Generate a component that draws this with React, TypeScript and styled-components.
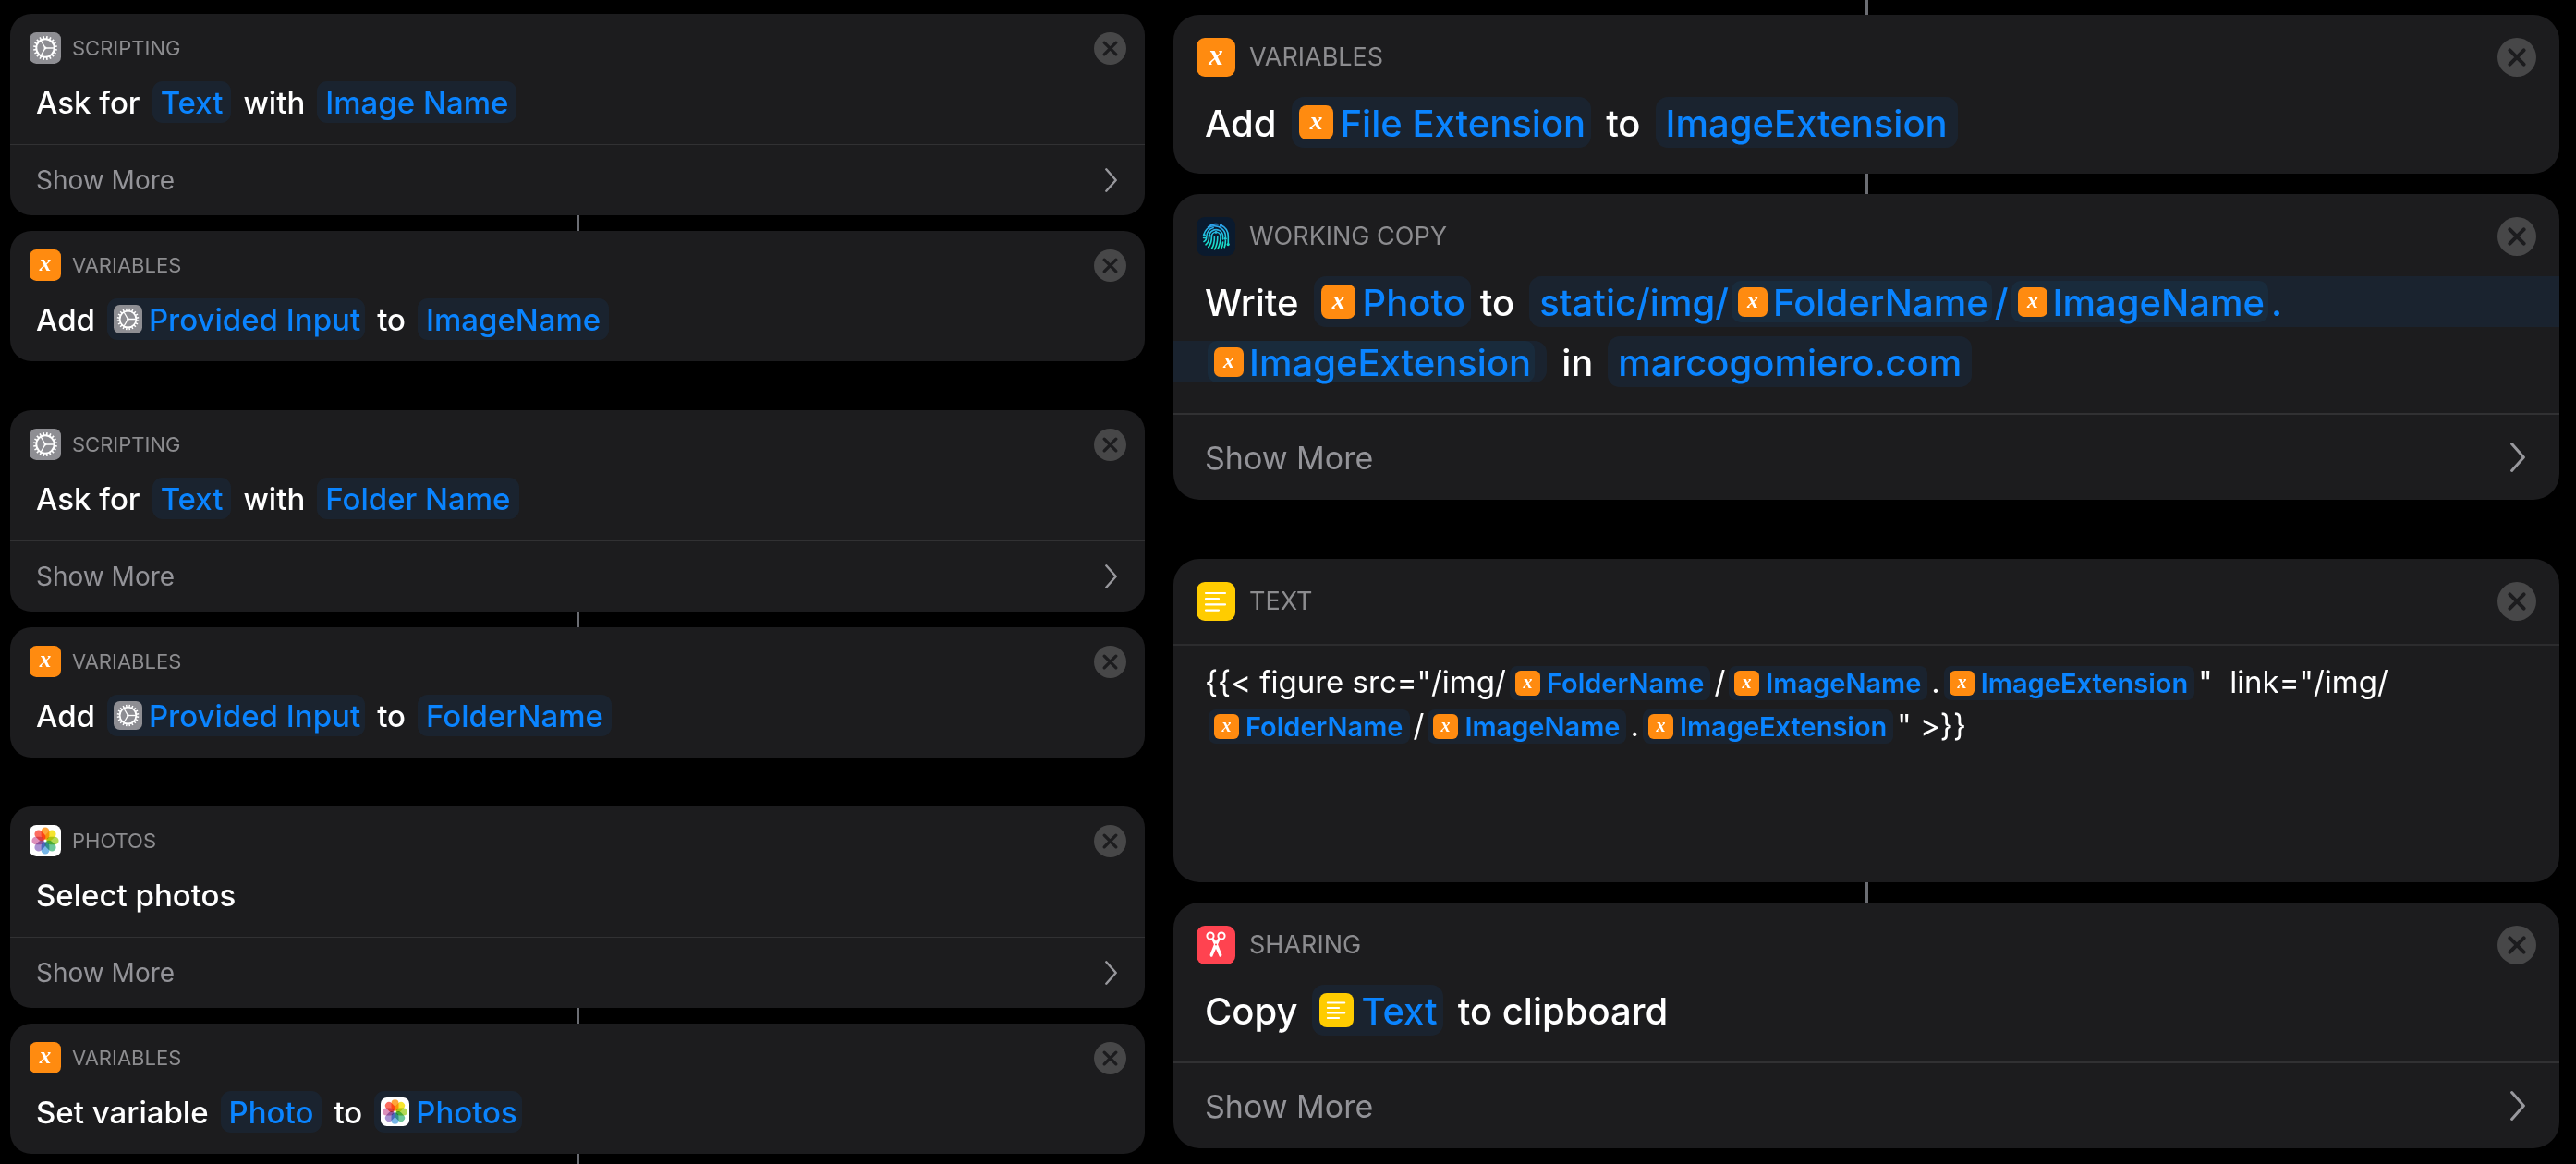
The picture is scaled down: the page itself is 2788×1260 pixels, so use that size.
import React from "react";
import styled, { createGlobalStyle, css, ThemeProvider } from "styled-components";

const small = {
  cardRadius: 23,
  headerHeight: 73,
  headerPad: "20px 20px 19px 21px",
  headerGap: 12,
  icon: 34,
  close: 35,
  label: 22,
  text: 33,
  more: 28,
  line: 45,
  lineGap: 8,
  wordGap: 13,
  bodyPad: 28,
  bodyBottom: 23,
  pillRadius: 11,
  pillPad: 9,
  tokenIcon: 31,
  tokenPad: 7,
  moreHeight: 76,
  morePadRight: 30,
  chevron: 26,
  divider: 1,
  connector: 17,
  connectorWidth: 3,
};

const large: typeof small = {
  cardRadius: 28,
  headerHeight: 89,
  headerPad: "25px 25px 22px 25px",
  headerGap: 15,
  icon: 42,
  close: 42,
  label: 27,
  text: 40,
  more: 34,
  line: 55,
  lineGap: 10,
  wordGap: 16,
  bodyPad: 34,
  bodyBottom: 28,
  pillRadius: 13,
  pillPad: 11,
  tokenIcon: 37,
  tokenPad: 8,
  moreHeight: 92,
  morePadRight: 37,
  chevron: 32,
  divider: 2,
  connector: 22,
  connectorWidth: 4,
};

declare module "styled-components" {
  export interface DefaultTheme {
    cardRadius: number; headerHeight: number; headerPad: string; headerGap: number; icon: number;
    close: number; label: number; text: number; more: number; line: number; lineGap: number;
    wordGap: number; bodyPad: number; bodyBottom: number; pillRadius: number; pillPad: number;
    tokenIcon: number; tokenPad: number; moreHeight: number; morePadRight: number; chevron: number;
    divider: number; connector: number; connectorWidth: number;
  }
}

const GlobalStyle = createGlobalStyle`
  *, *::before, *::after { box-sizing: border-box; }
  body { margin: 0; background: #000; }
  button { border: 0; padding: 0; margin: 0; background: none; font: inherit; color: inherit; text-align: left; cursor: pointer; }
  svg { display: block; flex: none; }
`;

const Page = styled.main`
  display: grid;
  grid-template-columns: 1228fr 1500fr;
  column-gap: 31px;
  min-height: 100vh;
  padding: 0 18px 0 11px;
  background: #000;
  color: #fff;
  font-family: Inter, "Liberation Sans", sans-serif;
`;

const Column = styled.div<{ $top?: number }>`
  display: flex;
  flex-direction: column;
  min-width: 0;
  padding-top: ${(p) => p.$top ?? 0}px;
`;

const Connector = styled.div<{ $height?: number; $grow?: boolean }>`
  align-self: center;
  width: ${(p) => p.theme.connectorWidth}px;
  ${(p) => (p.$grow ? css`flex: 1;` : css`height: ${p.$height ?? p.theme.connector}px;`)}
  background: #6b6d73;
`;

const Spacer = styled.div<{ $height: number }>`
  height: ${(p) => p.$height}px;
`;

const CardBox = styled.section`
  overflow: hidden;
  border-radius: ${(p) => p.theme.cardRadius}px;
  background: #1c1c1e;
`;

const Header = styled.header`
  display: flex;
  align-items: center;
  gap: ${(p) => p.theme.headerGap}px;
  height: ${(p) => p.theme.headerHeight}px;
  padding: ${(p) => p.theme.headerPad};
`;

const Title = styled.h2`
  flex: 1;
  margin: 0;
  color: #8c8c8f;
  font-size: ${(p) => p.theme.label}px;
  font-weight: 400;
  line-height: ${(p) => p.theme.icon}px;
`;

const CloseButton = styled.button`
  flex: none;
  width: ${(p) => p.theme.close}px;
  height: ${(p) => p.theme.close}px;
`;

const Sentence = styled.div`
  display: flex;
  flex-direction: column;
  gap: ${(p) => p.theme.lineGap}px;
  padding-bottom: ${(p) => p.theme.bodyBottom}px;
  font-size: ${(p) => p.theme.text}px;
  font-weight: 500;
  line-height: ${(p) => p.theme.line - 2}px;
  white-space: pre;
`;

const Line = styled.div<{ $bleedLeft?: boolean; $bleedRight?: boolean }>`
  display: flex;
  align-items: center;
  gap: ${(p) => p.theme.wordGap}px;
  padding-left: ${(p) => (p.$bleedLeft ? 0 : p.theme.bodyPad)}px;
  padding-right: ${(p) => (p.$bleedRight ? 0 : p.theme.bodyPad)}px;
`;

const Word = styled.span`
  display: block;
  padding-top: 2px;
`;

const TightPair = styled.span`
  display: flex;
  gap: 10px;
`;

const PillButton = styled.button`
  padding: 0 ${(p) => p.theme.pillPad}px;
  border-radius: ${(p) => p.theme.pillRadius}px;
  background: rgba(10, 132, 255, 0.08);
  color: #0a84ff;
`;

const IconPill = styled(PillButton)`
  display: flex;
  align-items: center;
  gap: ${(p) => p.theme.tokenPad}px;
  padding: 0 ${(p) => p.theme.tokenPad - 2}px 0 ${(p) => p.theme.tokenPad}px;
`;

const PathStart = styled.span`
  display: flex;
  flex: 1;
  align-items: center;
  padding-left: ${(p) => p.theme.pillPad}px;
  border-radius: ${(p) => p.theme.pillRadius}px 0 0 ${(p) => p.theme.pillRadius}px;
  background: rgba(10, 132, 255, 0.08);
  color: #0a84ff;
`;

const PathEnd = styled(PathStart)`
  flex: none;
  padding: 0 10px 0 34px;
  border-radius: 0 ${(p) => p.theme.pillRadius}px ${(p) => p.theme.pillRadius}px 0;
`;

const InnerPill = styled.button`
  display: flex;
  align-items: center;
  gap: 6px;
  height: 45px;
  margin: 0 3px;
  padding: 0 4px 0 7px;
  border-radius: 10px;
  background: rgba(20, 132, 200, 0.09);
`;

const MoreButton = styled.button`
  display: flex;
  align-items: center;
  justify-content: space-between;
  width: 100%;
  height: ${(p) => p.theme.moreHeight + p.theme.divider}px;
  padding: 0 ${(p) => p.theme.morePadRight}px 0 ${(p) => p.theme.bodyPad}px;
  border-top: ${(p) => p.theme.divider}px solid #313133;
  color: #939398;
  font-size: ${(p) => p.theme.more}px;
`;

const TextHeader = styled(Header)`
  height: 92px;
  padding-bottom: 25px;
`;

const TextBody = styled.div`
  min-height: 258px;
  padding: 16px 34px;
  border-top: 2px solid #2c2c2e;
  font-size: 33px;
  line-height: 47px;
  white-space: pre-wrap;
`;

const TextToken = styled.button`
  display: inline-flex;
  align-items: center;
  gap: 7px;
  height: 37px;
  margin: 0 4px;
  padding: 0 7px 0 6px;
  border-radius: 8px;
  background: rgba(10, 132, 255, 0.08);
  color: #0a84ff;
  font-size: 29px;
  font-weight: 600;
  line-height: 37px;
`;

const TokenLabel = styled.span`
  align-self: baseline;
`;

type IconProps = { size: number };

const Glyph = styled.text`
  fill: #fff;
  font: italic bold 31px "Liberation Serif", serif;
`;

function VariableIcon({ size }: IconProps) {
  return (
    <svg width={size} height={size} viewBox="0 0 42 42" aria-hidden="true">
      <rect width="42" height="42" rx="9" fill="#ff8b10" />
      <Glyph x="21" y="29" textAnchor="middle">x</Glyph>
    </svg>
  );
}

function GearIcon({ size }: IconProps) {
  const teeth = Array.from({ length: 20 }, (_, i) => i * 18 + 9);
  return (
    <svg width={size} height={size} viewBox="0 0 42 42" aria-hidden="true">
      <rect width="42" height="42" rx="9" fill="#8e8e93" />
      <g stroke="#fff" fill="none">
        <circle cx="21" cy="21" r="12" strokeWidth="2.4" />
        {teeth.map((a) => (
          <path key={a} d="M21 9.4V5" strokeWidth="2" transform={`rotate(${a} 21 21)`} />
        ))}
        {[90, 210, 330].map((a) => (
          <path key={a} d="M21 21V9.6" strokeWidth="1.8" transform={`rotate(${a} 21 21)`} />
        ))}
      </g>
      <circle cx="21" cy="21" r="1.8" fill="#fff" />
    </svg>
  );
}

const PETALS = ["#ffa53a", "#f6e52e", "#b4da55", "#6cc79a", "#76b6e8", "#a992d1", "#dd90bb", "#fc6c5f"];

const Petal = styled.rect`
  mix-blend-mode: multiply;
`;

function PhotosIcon({ size }: IconProps) {
  return (
    <svg width={size} height={size} viewBox="0 0 42 42" aria-hidden="true">
      <rect width="42" height="42" rx="9" fill="#fff" />
      {PETALS.map((color, i) => (
        <Petal key={color} x="15.6" y="3" width="10.8" height="16.4" rx="5.4" fill={color} transform={`rotate(${i * 45} 21 21)`} />
      ))}
    </svg>
  );
}

function FingerprintIcon({ size }: IconProps) {
  return (
    <svg width={size} height={size} viewBox="0 0 42 42" aria-hidden="true">
      <defs>
        <linearGradient id="print" x1="0" y1="7" x2="0" y2="35" gradientUnits="userSpaceOnUse">
          <stop offset="0" stopColor="#2f9df0" />
          <stop offset="0.5" stopColor="#1fc8dc" />
          <stop offset="1" stopColor="#16ecc0" />
        </linearGradient>
      </defs>
      <rect width="42" height="42" rx="9" fill="#0a1a2e" />
      <g fill="none" stroke="url(#print)" strokeWidth="1.6" strokeLinecap="round">
        <path d="M12.5 10.8A13.4 13.4 0 0 1 23 7.8" />
        <path d="M26.5 8.8A13.3 13.3 0 0 1 34.3 21V29" />
        <path d="M8 18.5A13.4 13.4 0 0 1 11 13.2C15 8.8 23 8.6 27.5 12.6A10.6 10.6 0 0 1 31.4 20.5V22" />
        <path d="M7.6 22.5H9.4M8 26.4C10 25.6 10.8 24 10.8 21A10.3 10.3 0 0 1 18.2 11.6" />
        <path d="M10 29.8C12.8 27.6 13.6 25 13.6 21A7.6 7.6 0 0 1 24.5 14.4A7.6 7.6 0 0 1 28.6 21V24" />
        <path d="M12.8 32.4C15.8 29.4 16.4 26 16.4 21A4.8 4.8 0 0 1 26 21C26 27 25.6 29.6 23 34.4" />
        <path d="M16.6 33.8C19 30.2 19.4 26.6 19.4 21.4M22.8 21C22.8 27 22 30.6 19.6 34.8" />
        <path d="M28.6 27C28.4 30 27.8 32 26.8 34M31.4 25.4C31.4 28.4 31 30.6 30.2 32.6" />
      </g>
      <g fill="url(#print)">
        <circle cx="26.4" cy="9" r="1.5" />
        <circle cx="34.2" cy="29.6" r="1.6" />
        <circle cx="31.2" cy="23.2" r="1.5" />
        <circle cx="14" cy="20" r="1.5" />
        <circle cx="8.4" cy="19.6" r="1.5" />
        <circle cx="21" cy="16.4" r="1.3" />
      </g>
    </svg>
  );
}

function TextIcon({ size }: IconProps) {
  return (
    <svg width={size} height={size} viewBox="0 0 42 42" aria-hidden="true">
      <rect width="42" height="42" rx="9" fill="#ffcc00" />
      <path d="M10 12h21M10 18.2h14M10 24.4h21M10 30.6h14" stroke="#fff" strokeWidth="2.2" strokeLinecap="round" />
    </svg>
  );
}

function ScissorsIcon({ size }: IconProps) {
  return (
    <svg width={size} height={size} viewBox="0 0 42 42" aria-hidden="true">
      <rect width="42" height="42" rx="9" fill="#ff4350" />
      <g fill="none" stroke="#fff" strokeWidth="2">
        <circle cx="15" cy="11" r="3.6" />
        <circle cx="27" cy="11" r="3.6" />
      </g>
      <path d="M16.2 14.6L18.6 13.4L22.6 19L27.4 31.2C27.6 33.4 26 34.6 24.8 33.4L19.6 21.8Z" fill="#fff" />
      <path d="M25.8 14.6L23.4 13.4L19.4 19L14.6 31.2C14.4 33.4 16 34.6 17.2 33.4L22.4 21.8Z" fill="#fff" />
      <circle cx="21" cy="20.4" r="1" fill="#ff4350" />
    </svg>
  );
}

function CloseIcon({ size }: IconProps) {
  return (
    <svg width={size} height={size} viewBox="0 0 42 42" aria-hidden="true">
      <circle cx="21" cy="21" r="21" fill="#474748" />
      <path d="M13.4 13.4L28.6 28.6M28.6 13.4L13.4 28.6" stroke="#1c1c1e" strokeWidth="4" strokeLinecap="round" />
    </svg>
  );
}

function Chevron({ size }: IconProps) {
  return (
    <svg width={size / 2} height={size} viewBox="0 0 16 32" fill="none" aria-hidden="true">
      <path d="M1.6 1.6L14.4 16L1.6 30.4" stroke="#98989d" strokeWidth="3" strokeLinecap="round" strokeLinejoin="round" />
    </svg>
  );
}

type IconType = (p: IconProps) => React.ReactElement;
type Size = "small" | "large";
const metrics = { small, large };

function HeaderContent({ icon: Icon, title, size }: { icon: IconType; title: string; size: Size }) {
  const m = metrics[size];
  return (
    <>
      <Icon size={m.icon} />
      <Title>{title}</Title>
      <CloseButton type="button" aria-label={`Remove ${title}`}>
        <CloseIcon size={m.close} />
      </CloseButton>
    </>
  );
}

function Card({ icon, title, size, more, children }: { icon: IconType; title: string; size: Size; more?: boolean; children: React.ReactNode }) {
  return (
    <CardBox>
      <Header>
        <HeaderContent icon={icon} title={title} size={size} />
      </Header>
      <Sentence>{children}</Sentence>
      {more && (
        <MoreButton type="button">
          Show More
          <Chevron size={metrics[size].chevron} />
        </MoreButton>
      )}
    </CardBox>
  );
}

function Pill({ children }: { children: string }) {
  return (
    <PillButton type="button">
      <Word>{children}</Word>
    </PillButton>
  );
}

function Token({ icon: Icon, size, children }: { icon: IconType; size: Size; children: string }) {
  return (
    <IconPill type="button">
      <Icon size={metrics[size].tokenIcon} />
      <Word>{children}</Word>
    </IconPill>
  );
}

function PathVariable({ children }: { children: string }) {
  return (
    <InnerPill type="button">
      <VariableIcon size={32} />
      <Word>{children}</Word>
    </InnerPill>
  );
}

function InlineVariable({ children }: { children: string }) {
  return (
    <TextToken type="button">
      <VariableIcon size={27} />
      <TokenLabel>{children}</TokenLabel>
    </TextToken>
  );
}

function AskAndStore({ prompt, variable }: { prompt: string; variable: string }) {
  return (
    <>
      <Card icon={GearIcon} title="SCRIPTING" size="small" more>
        <Line>
          <Word>Ask for</Word>
          <Pill>Text</Pill>
          <Word>with</Word>
          <Pill>{prompt}</Pill>
        </Line>
      </Card>
      <Connector />
      <Card icon={VariableIcon} title="VARIABLES" size="small">
        <Line>
          <Word>Add</Word>
          <Token icon={GearIcon} size="small">Provided Input</Token>
          <Word>to</Word>
          <Pill>{variable}</Pill>
        </Line>
      </Card>
    </>
  );
}

export default function App() {
  return (
    <>
      <GlobalStyle />
      <Page>
        <ThemeProvider theme={small}>
          <Column $top={15}>
            <AskAndStore prompt="Image Name" variable="ImageName" />
            <Spacer $height={53} />
            <AskAndStore prompt="Folder Name" variable="FolderName" />
            <Spacer $height={53} />
            <Card icon={PhotosIcon} title="PHOTOS" size="small" more>
              <Line>
                <Word>Select photos</Word>
              </Line>
            </Card>
            <Connector />
            <Card icon={VariableIcon} title="VARIABLES" size="small">
              <Line>
                <Word>Set variable</Word>
                <Pill>Photo</Pill>
                <Word>to</Word>
                <Token icon={PhotosIcon} size="small">Photos</Token>
              </Line>
            </Card>
            <Connector $grow />
          </Column>
        </ThemeProvider>

        <ThemeProvider theme={large}>
          <Column>
            <Connector $height={16} />
            <Card icon={VariableIcon} title="VARIABLES" size="large">
              <Line>
                <Word>Add</Word>
                <Token icon={VariableIcon} size="large">File Extension</Token>
                <Word>to</Word>
                <Pill>ImageExtension</Pill>
              </Line>
            </Card>
            <Connector />
            <Card icon={FingerprintIcon} title="WORKING COPY" size="large" more>
              <Line $bleedRight>
                <Word>Write</Word>
                <TightPair>
                  <Token icon={VariableIcon} size="large">Photo</Token>
                  <Word>to</Word>
                </TightPair>
                <PathStart>
                  <Word>static/img/</Word>
                  <PathVariable>FolderName</PathVariable>
                  <Word>/</Word>
                  <PathVariable>ImageName</PathVariable>
                  <Word>.</Word>
                </PathStart>
              </Line>
              <Line $bleedLeft>
                <PathEnd>
                  <PathVariable>ImageExtension</PathVariable>
                </PathEnd>
                <Word>in</Word>
                <Pill>marcogomiero.com</Pill>
              </Line>
            </Card>
            <Spacer $height={64} />
            <CardBox>
              <TextHeader>
                <HeaderContent icon={TextIcon} title="TEXT" size="large" />
              </TextHeader>
              <TextBody>
                {'{{< figure src="/img/'}
                <InlineVariable>FolderName</InlineVariable>/
                <InlineVariable>ImageName</InlineVariable>.
                <InlineVariable>ImageExtension</InlineVariable>
                {'"  link="/img/'}
                <InlineVariable>FolderName</InlineVariable>/
                <InlineVariable>ImageName</InlineVariable>.
                <InlineVariable>ImageExtension</InlineVariable>
                {'" >}}'}
              </TextBody>
            </CardBox>
            <Connector />
            <Card icon={ScissorsIcon} title="SHARING" size="large" more>
              <Line>
                <Word>Copy</Word>
                <Token icon={TextIcon} size="large">Text</Token>
                <Word>to clipboard</Word>
              </Line>
            </Card>
          </Column>
        </ThemeProvider>
      </Page>
    </>
  );
}
